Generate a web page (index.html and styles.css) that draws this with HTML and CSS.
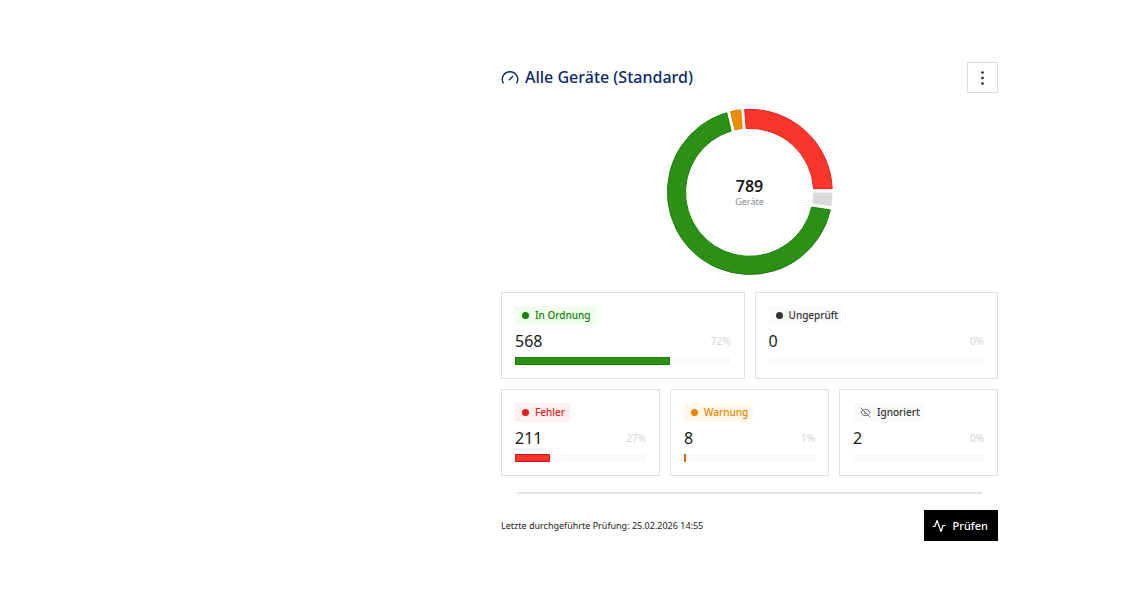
FILE: index.html
```html
<!DOCTYPE html>
<html lang="de">
<head>
    <meta charset="UTF-8">
    <meta name="viewport" content="width=device-width, initial-scale=1.0">
    <title>Alle Geräte (Standard)</title>
    <link rel="stylesheet" href="styles.css">
</head>
<body>
    <main class="widget">
        <header class="widget-header">
            <svg class="gauge-icon" viewBox="0 0 18 18" aria-hidden="true">
                <path d="M2.2 14A7.7 7.7 0 1 1 15.8 14M8.4 10.8l3.2-3.2"/>
            </svg>
            <h1>Alle Geräte (Standard)</h1>
            <button class="menu-button" type="button" aria-label="Menü">
                <svg viewBox="0 0 16 16" aria-hidden="true">
                    <circle cx="7.5" cy="2.5" r="1.3"/>
                    <circle cx="7.5" cy="8" r="1.3"/>
                    <circle cx="7.5" cy="13.5" r="1.3"/>
                </svg>
            </button>
        </header>

        <div class="chart">
            <svg viewBox="0 0 168 168" aria-hidden="true">
                <path class="arc-error" d="M78.7 1.5A82.5 82.5 0 0 1 166.2 80.6H147.6A64 64 0 0 0 80.2 20.4Z"/>
                <path class="arc-ignored" d="M166.5 84.5A83 83 0 0 1 165.2 98.2L146.3 95.5A64 64 0 0 0 147.2 84.5Z"/>
                <path class="arc-ok" d="M164.4 102A82.5 82.5 0 1 1 60.7 4.8L65.2 23A64 64 0 1 0 145.8 99Z"/>
                <path class="arc-warning" d="M64.6 3.6A82.5 82.5 0 0 1 74.7 1.8L76.2 20.6A64 64 0 0 0 69 21.9Z"/>
            </svg>
            <div class="chart-label">
                <strong>789</strong>
                <span>Geräte</span>
            </div>
        </div>

        <section class="cards">
            <article class="card card-wide ok">
                <span class="badge"><i class="dot"></i>In Ordnung</span>
                <div class="values"><span class="count">568</span><span class="percent">72%</span></div>
                <div class="bar"><div class="bar-fill" style="width: 72%"></div></div>
            </article>
            <article class="card card-wide unchecked">
                <span class="badge"><i class="dot"></i>Ungeprüft</span>
                <div class="values"><span class="count">0</span><span class="percent">0%</span></div>
                <div class="bar"></div>
            </article>
            <article class="card error">
                <span class="badge"><i class="dot"></i>Fehler</span>
                <div class="values"><span class="count">211</span><span class="percent">27%</span></div>
                <div class="bar"><div class="bar-fill" style="width: 27%"></div></div>
            </article>
            <article class="card warning">
                <span class="badge"><i class="dot"></i>Warnung</span>
                <div class="values"><span class="count">8</span><span class="percent">1%</span></div>
                <div class="bar"><div class="bar-fill" style="width: 1%"></div></div>
            </article>
            <article class="card ignored">
                <span class="badge">
                    <svg class="eye-icon" viewBox="0 0 24 24" aria-hidden="true">
                        <path d="M10.7 5.1a10.7 10.7 0 0 1 11.2 6.6 1 1 0 0 1 0 .7 10.7 10.7 0 0 1-1.4 2.5M14.1 14.2a3 3 0 0 1-4.3-4.3M17.5 17.5a10.7 10.7 0 0 1-15.4-5.2 1 1 0 0 1 0-.7 10.7 10.7 0 0 1 4.4-5.1M2 2l20 20"/>
                    </svg>Ignoriert
                </span>
                <div class="values"><span class="count">2</span><span class="percent">0%</span></div>
                <div class="bar"></div>
            </article>
        </section>

        <hr class="divider">

        <footer class="widget-footer">
            <span class="last-check">Letzte durchgeführte Prüfung: 25.02.2026 14:55</span>
            <button class="check-button" type="button">
                <svg viewBox="0 0 14 14" aria-hidden="true">
                    <path d="M1 7.5h1.8L5 1.5l4 11 2-6h2"/>
                </svg>
                Prüfen
            </button>
        </footer>
    </main>
</body>
</html>
```
FILE: styles.css
```css
* {
    box-sizing: border-box;
}
body {
    margin: 0;
    padding: 62px 127px 40px 501px;
    background: #fff;
    color: #1a1a1a;
    font-family: "Noto Sans", "Open Sans", sans-serif;
    font-size: 10px;
}
button {
    font-family: inherit;
    cursor: pointer;
}

/* Kopfzeile */
.widget-header {
    display: flex;
    align-items: center;
    gap: 6px;
}
.widget-header h1 {
    flex: 1;
    margin: 0;
    padding-bottom: 2px;
    color: #0b2a6b;
    font-size: 16px;
    font-weight: 500;
    line-height: 20px;
}
.gauge-icon {
    width: 18px;
    height: 18px;
    fill: none;
    stroke: #0b2a6b;
    stroke-width: 1.4;
    stroke-linecap: round;
}
.menu-button {
    display: flex;
    align-items: center;
    justify-content: center;
    width: 31px;
    height: 31px;
    padding: 0;
    border: 1px solid #dedede;
    background: #fff;
}
.menu-button svg {
    width: 16px;
    height: 16px;
    fill: #222;
}

/* Diagramm */
.chart {
    display: grid;
    place-items: center;
    margin: 15px 0 16px;
}
.chart > * {
    grid-area: 1 / 1;
}
.chart svg {
    width: 168px;
    height: 168px;
}
.chart-label {
    display: flex;
    flex-direction: column;
    align-items: center;
    padding-top: 2px;
    color: #888;
}
.chart-label strong {
    color: #1a1a1a;
    font-size: 16px;
    font-weight: 600;
    line-height: 18px;
}
.chart-label span {
    font-size: 9px;
    line-height: 14px;
}
.arc-ok {
    fill: #2c9016;
    stroke: #168008;
}
.arc-error {
    fill: #f8362c;
    stroke: #e01e1a;
}
.arc-warning {
    fill: #f08c00;
    stroke: #e07c00;
}
.arc-ignored {
    fill: #d9d9d9;
}

/* Karten */
.cards {
    display: grid;
    grid-template-columns: repeat(6, 1fr);
    gap: 10px;
}
.card {
    grid-column: span 2;
    padding: 13px;
    border: 1px solid #e0e0e0;
}
.card-wide {
    grid-column: span 3;
}
.badge {
    display: flex;
    align-items: center;
    width: fit-content;
    height: 19px;
    padding: 0 5px 0 7px;
    background: #fafafa;
    color: #333;
    font-weight: 500;
    line-height: 19px;
}
.dot {
    width: 7px;
    height: 7px;
    margin-right: 6px;
    border-radius: 50%;
    background: currentColor;
}
.eye-icon {
    width: 11px;
    height: 11px;
    margin-right: 6px;
    fill: none;
    stroke: #666;
    stroke-width: 2;
    stroke-linecap: round;
}
.values {
    display: flex;
    align-items: center;
    justify-content: space-between;
    height: 32px;
}
.count {
    font-size: 16px;
}
.percent {
    color: #d4d4d4;
}
.bar {
    height: 8px;
    background: #fafafa;
}
.bar-fill {
    height: 8px;
    border: 1px solid;
}
.ok .badge {
    background: #f0feec;
    color: #168008;
}
.ok .bar-fill {
    border-color: #168008;
    background: #2c9016;
}
.error .badge {
    background: #fff0ef;
    color: #dc1f1f;
}
.error .bar-fill {
    border-color: #d81818;
    background: #f8362c;
}
.warning .badge {
    background: #fff8eb;
    color: #e88400;
}
.warning .bar-fill {
    border-color: #d4660c;
    background: #f08c00;
}

/* Fußzeile */
.divider {
    height: 2px;
    margin: 16px;
    border: 0;
    background: #e2e2e2;
}
.widget-footer {
    display: flex;
    align-items: center;
    justify-content: space-between;
}
.last-check {
    font-size: 9px;
}
.check-button {
    display: flex;
    align-items: center;
    gap: 7px;
    height: 31px;
    padding: 0 10px 0 8px;
    border: 0;
    background: #000;
    color: #fff;
    font-size: 11px;
    font-weight: 500;
}
.check-button svg {
    width: 14px;
    height: 14px;
    fill: none;
    stroke: #fff;
    stroke-width: 1.2;
    stroke-linecap: round;
    stroke-linejoin: round;
}
```
